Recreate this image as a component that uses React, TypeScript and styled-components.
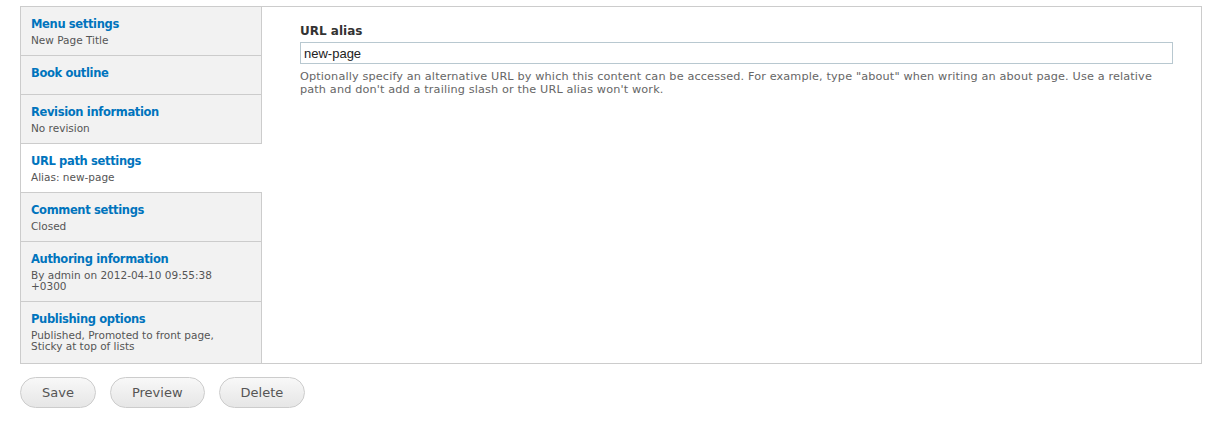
import React from 'react';
import styled, { createGlobalStyle } from 'styled-components';

const GlobalStyle = createGlobalStyle`
  html, body {
    margin: 0;
    padding: 0;
    background: #fff;
  }
  body {
    font-family: "DejaVu Sans", Verdana, sans-serif;
    color: #333;
  }
`;

const Page = styled.div`
  padding: 6px 14px 0 20px;
`;

const Tabs = styled.div`
  display: flex;
  border: 1px solid #ccc;
  height: 358px;
  box-sizing: border-box;
`;

const TabList = styled.ul`
  list-style: none;
  margin: 0;
  padding: 0;
  width: 240px;
  flex-shrink: 0;
  background: #f2f2f2;
  border-right: 1px solid #ccc;
  margin-right: -1px;
`;

const Tab = styled.li<{ $active?: boolean; $lines: number }>`
  box-sizing: border-box;
  padding: 8px 10px ${p => (p.$lines === 0 ? '12px' : '9px')} 10px;
  border-bottom: 1px solid #ccc;
  background: ${p => (p.$active ? '#fff' : 'transparent')};
  margin-right: ${p => (p.$active ? '-1px' : '0')};
  position: relative;
  &:last-child {
    border-bottom: none;
  }
`;

const TabTitle = styled.a`
  display: block;
  font-size: 11.5px;
  font-weight: bold;
  line-height: 18px;
  color: #0074bd;
  text-decoration: none;
  letter-spacing: -0.35px;
`;

const TabSummary = styled.div`
  font-size: 10.5px;
  line-height: 11px;
  color: #555;
  margin-top: 2px;
  padding-right: 20px;
`;

const Pane = styled.div`
  flex: 1;
  padding: 17px 28px 0 39px;
`;

const Label = styled.label`
  display: block;
  font-size: 12px;
  font-weight: bold;
  color: #333;
  line-height: 14px;
  margin-bottom: 4px;
`;

const Input = styled.input`
  display: block;
  width: 100%;
  box-sizing: border-box;
  height: 22px;
  border: 1px solid #b8c8d0;
  padding: 2px 3px;
  font-family: "Liberation Sans", Arial, sans-serif;
  font-size: 13px;
  color: #222;
  outline: none;
`;

const Description = styled.div`
  font-size: 11.25px;
  letter-spacing: 0.14px;
  line-height: 13px;
  color: #666;
  margin-top: 6px;
`;

const Actions = styled.div`
  display: flex;
  gap: 14px;
  margin-top: 13px;
`;

const Button = styled.button`
  height: 31px;
  padding: 0 21px;
  border-radius: 16px;
  border: 1px solid #ccc;
  background: linear-gradient(#f8f8f8, #e6e6e6);
  font-family: "DejaVu Sans", Verdana, sans-serif;
  font-size: 13px;
  color: #555;
`;

const tabs = [
  { title: 'Menu settings', summary: ['New Page Title'] },
  { title: 'Book outline', summary: [] },
  { title: 'Revision information', summary: ['No revision'] },
  { title: 'URL path settings', summary: ['Alias: new-page'], active: true },
  { title: 'Comment settings', summary: ['Closed'] },
  { title: 'Authoring information', summary: ['By admin on 2012-04-10 09:55:38 +0300'] },
  { title: 'Publishing options', summary: ['Published, Promoted to front page, Sticky at top of lists'] },
];

export default function App() {
  return (
    <Page>
      <GlobalStyle />
      <Tabs>
        <TabList>
          {tabs.map(t => (
            <Tab key={t.title} $active={t.active} $lines={t.summary.length}>
              <TabTitle href="#">{t.title}</TabTitle>
              {t.summary.map(s => (
                <TabSummary key={s}>{s}</TabSummary>
              ))}
            </Tab>
          ))}
        </TabList>
        <Pane>
          <Label>URL alias</Label>
          <Input defaultValue="new-page" />
          <Description>
            Optionally specify an alternative URL by which this content can be accessed. For example, type "about" when writing an about page. Use a relative path and don't add a trailing slash or the URL alias won't work.
          </Description>
        </Pane>
      </Tabs>
      <Actions>
        <Button>Save</Button>
        <Button>Preview</Button>
        <Button>Delete</Button>
      </Actions>
    </Page>
  );
}
